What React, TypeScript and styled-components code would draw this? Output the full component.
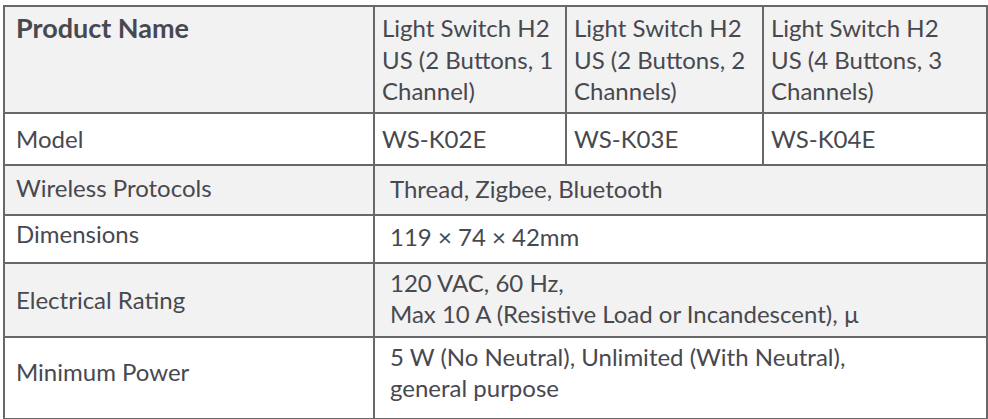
import styled, { createGlobalStyle } from "styled-components";

const GlobalStyle = createGlobalStyle`
  html, body {
    margin: 0;
    padding: 0;
    background: #fff;
  }
  body {
    font-family: Lato, "Noto Sans", sans-serif;
    color: #48484f;
  }
`;

type Tone = "gray" | "white";

interface SpecRow {
  label: string;
  tone: Tone;
  height: number;
  lift: number;
  cells?: string[];
  span?: string[];
}

const rows: SpecRow[] = [
  { label: "Model", tone: "white", height: 52, lift: 0, cells: ["WS-K02E", "WS-K03E", "WS-K04E"] },
  { label: "Wireless Protocols", tone: "gray", height: 50, lift: 4, span: ["Thread, Zigbee, Bluetooth"] },
  { label: "Dimensions", tone: "white", height: 48, lift: 10, span: ["119 × 74 × 42mm"] },
  {
    label: "Electrical Rating",
    tone: "gray",
    height: 74,
    lift: 0,
    span: ["120 VAC, 60 Hz,", "Max 10 A (Resistive Load or Incandescent), µ"],
  },
  {
    label: "Minimum Power",
    tone: "white",
    height: 82,
    lift: 12,
    span: ["5 W (No Neutral), Unlimited (With Neutral),", "general purpose"],
  },
];

const products = [
  ["Light Switch H2", "US (2 Buttons, 1", "Channel)"],
  ["Light Switch H2", "US (2 Buttons, 2", "Channels)"],
  ["Light Switch H2", "US (4 Buttons, 3", "Channels)"],
];

const App = (): JSX.Element => {
  return (
    <>
      <GlobalStyle />
      <Page>
        <SpecTable>
          <colgroup>
            <col style={{ width: 370 }} />
            <col style={{ width: 192 }} />
            <col style={{ width: 197 }} />
            <col style={{ width: 224 }} />
          </colgroup>
          <tbody>
            <Row $tone="gray" $height={107}>
              <HeadLabel>Product Name</HeadLabel>
              {products.map((lines, i) => (
                <HeadCell key={i}>
                  {lines.map((line, j) => (
                    <Line key={j}>{line}</Line>
                  ))}
                </HeadCell>
              ))}
            </Row>
            {rows.map((row) => (
              <Row key={row.label} $tone={row.tone} $height={row.height}>
                <LabelCell $lift={row.lift}>{row.label}</LabelCell>
                {row.cells &&
                  row.cells.map((c) => <ValueCell key={c}>{c}</ValueCell>)}
                {row.span && (
                  <SpanCell
                    colSpan={3}
                    $multi={row.span.length > 1}
                    $lift={row.lift}
                  >
                    {row.span.map((line) => (
                      <Line key={line}>{line}</Line>
                    ))}
                  </SpanCell>
                )}
              </Row>
            ))}
          </tbody>
        </SpecTable>
      </Page>
    </>
  );
};

export default App;

const Page = styled.div`
  padding: 5px 0 0 3px;
`;

const SpecTable = styled.table`
  border-collapse: collapse;
  table-layout: fixed;
  width: 983px;
  font-size: 24px;

  td {
    border: 2px solid #686868;
    padding: 0;
  }
`;

const Row = styled.tr<{ $tone: Tone; $height: number }>`
  height: ${(p) => p.$height}px;
  background: ${(p) => (p.$tone === "gray" ? "#f2f2f2" : "#ffffff")};
`;

const Line = styled.div`
  white-space: nowrap;
`;

const HeadLabel = styled.td`
  vertical-align: top;
  font-weight: 700;
  font-size: 27px;
  line-height: 32px;
  padding: 5px 11px 0 !important;
`;

const HeadCell = styled.td`
  vertical-align: top;
  line-height: 31.5px;
  padding: 5px 7px 0 !important;
`;

const LabelCell = styled.td<{ $lift: number }>`
  vertical-align: middle;
  line-height: 30px;
  padding: 0 11px ${(p) => p.$lift}px !important;
`;

const ValueCell = styled.td`
  vertical-align: middle;
  line-height: 30px;
  padding: 0 7px !important;
`;

const SpanCell = styled.td<{ $multi: boolean; $lift: number }>`
  vertical-align: ${(p) => (p.$multi ? "top" : "middle")};
  line-height: ${(p) => (p.$multi ? "31px" : "30px")};
  padding: ${(p) => (p.$multi ? "3px 15px 0" : `0 15px ${p.$lift / 2}px`)} !important;
`;
